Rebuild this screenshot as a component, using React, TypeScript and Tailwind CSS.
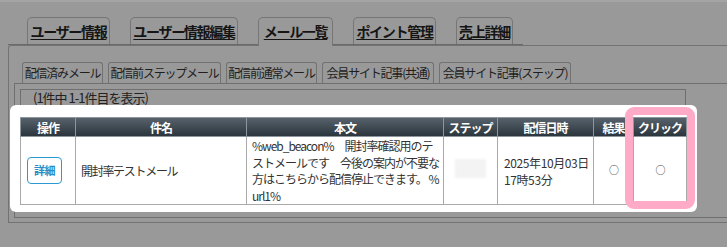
const font = {
  fontFamily: '"Noto Sans CJK JP", "Noto Sans", sans-serif',
};

const mainTabs = [
  { label: "ユーザー情報", w: "w-[83px]" },
  { label: "ユーザー情報編集", w: "w-[108px]" },
  { label: "メール一覧", w: "w-[75px]", active: true },
  { label: "ポイント管理", w: "w-[83px]" },
  { label: "売上詳細", w: "w-[57px]" },
];

const subTabs = [
  { label: "配信済みメール", w: "w-[81px]" },
  { label: "配信前ステップメール", w: "w-[113px]" },
  { label: "配信前通常メール", w: "w-[91px]" },
  { label: "会員サイト記事(共通)", w: "w-[112px]" },
  { label: "会員サイト記事(ステップ)", w: "w-[132px]" },
];

const App = () => {
  return (
    <div
      className="w-[727px] h-[247px] overflow-hidden bg-[#999999] border-t-2 border-[#a4a4a4]"
      style={font}
    >
      {/* main tabs */}
      <div className="ml-[8px] w-[515px] border-b border-[#6a6a6a] pl-[19px] pt-[15px] flex gap-[20px]">
        {mainTabs.map((t) => (
          <div
            key={t.label}
            className={`${t.w} h-[27px] border border-b-0 border-[#767676] rounded-t-[5px] bg-[#999999] flex items-center justify-center ${
              t.active ? "relative z-10 -mb-[2px] h-[29px] pb-[2px]" : ""
            }`}
          >
            <span className="text-[14px] font-bold tracking-[-1.3px] underline underline-offset-2 text-[#151515] leading-none">
              {t.label}
            </span>
          </div>
        ))}
      </div>

      {/* panel */}
      <div className="ml-[8px] h-[178px] border-l border-t border-b border-[#737373] rounded-tl-[3px] pt-[16px]">
        <div className="ml-[5px] border-b border-[#6f6f6f] pl-[8px] flex gap-[5px]">
          {subTabs.map((t) => (
            <div
              key={t.label}
              className={`${t.w} h-[21px] border border-b-0 border-[#727272] rounded-t-[3px] flex items-center justify-center text-[12px] tracking-[-1.2px] text-[#1e1e1e] whitespace-nowrap`}
            >
              {t.label}
            </div>
          ))}
        </div>

        <div className="ml-[5px] border-l border-b border-[#6f6f6f] pt-[5px] pb-[5px]">
          <div className="ml-[5px] w-[666px] h-[16px] border-t border-l border-r border-[#6f6f6f] pl-[12px] text-[13px] tracking-[-1px] leading-[15px] text-[#222] whitespace-nowrap">
            (1件中 1-1件目を表示)
          </div>

          {/* highlighted area */}
          <div className="relative -ml-[5px] w-[687px] h-[107px] bg-white rounded-[6px] pt-[12px] pl-[10px]">
            <table className="table-fixed border-collapse w-[666px] text-[12px] tracking-[-1px] text-[#333]">
              <colgroup>
                <col className="w-[55px]" />
                <col className="w-[171px]" />
                <col className="w-[197px]" />
                <col className="w-[54px]" />
                <col className="w-[96px]" />
                <col className="w-[40px]" />
                <col className="w-[53px]" />
              </colgroup>
              <thead>
                <tr className="h-[19px] bg-gradient-to-b from-[#57626c] to-[#28333b] text-white font-bold">
                  {["操作", "件名", "本文", "ステップ", "配信日時", "結果", "クリック"].map((h) => (
                    <th
                      key={h}
                      className="border border-[#8d969d] p-0 leading-[17px] text-center font-bold whitespace-nowrap"
                    >
                      {h}
                    </th>
                  ))}
                </tr>
              </thead>
              <tbody>
                <tr className="h-[66px]">
                  <td className="border border-[#a9a9a9] p-0 pl-[6px]">
                    <div className="w-[35px] h-[27px] border border-[#2b9ad2] rounded-[4px] flex items-center justify-center text-[11px] font-bold text-[#2a8cc4] tracking-[-0.5px]">
                      詳細
                    </div>
                  </td>
                  <td className="border border-[#a9a9a9] pl-[5px] text-[12px] tracking-[-1.3px] text-[#333]">
                    開封率テストメール
                  </td>
                  <td className="border border-[#a9a9a9] pl-[5px] leading-[16.5px] whitespace-nowrap align-top pt-[1px]">
                    %web_beacon%　開封率確認用のテ
                    <br />
                    ストメールです　今後の案内が不要な
                    <br />
                    方はこちらから配信停止できます。 %
                    <br />
                    url1%
                  </td>
                  <td className="border border-[#a9a9a9] p-0">
                    <div className="flex justify-center -mt-[5px]">
                      <div className="w-[31px] h-[19px] bg-[#f3f3f3] blur-[1px]" />
                    </div>
                  </td>
                  <td className="border border-[#a9a9a9] pl-[6px] leading-[17px] whitespace-nowrap tracking-[-0.4px]">
                    2025年10月03日
                    <br />
                    17時53分
                  </td>
                  <td className="border border-[#a9a9a9] text-center p-0 text-[10px] pb-[3px]">○</td>
                  <td className="border border-[#a9a9a9] text-center p-0 text-[10px] pb-[3px]">○</td>
                </tr>
              </tbody>
            </table>

            {/* pink highlight */}
            <div className="absolute left-[615px] top-[2px] w-[70px] h-[102px] border-[8px] border-[#ffaac6] rounded-[9px]" />
          </div>
        </div>
      </div>
    </div>
  );
};

export default App;
